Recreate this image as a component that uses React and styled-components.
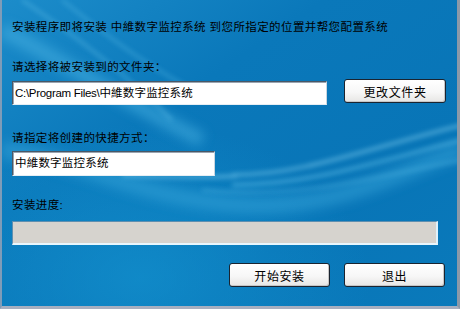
import React from "react";
import styled, { createGlobalStyle } from "styled-components";

const Global = createGlobalStyle`
  html, body { margin: 0; padding: 0; background: #fff; }
  body { font-family: "Liberation Sans", "Noto Sans CJK SC", sans-serif; }
`;

const Frame = styled.div`
  position: relative;
  width: 460px;
  height: 309px;
  box-sizing: border-box;
  border-left: 2px solid #7f9cb8;
  border-right: 3px solid #8c99a8;
  border-bottom: 3px solid #a7afc0;
  overflow: hidden;
  background: #0a77b9;
`;

const Backdrop = styled.svg`
  position: absolute;
  left: 0;
  top: 0;
  width: 460px;
  height: 309px;
  z-index: 0;
`;

const Content = styled.div`
  position: relative;
  z-index: 1;
  display: flex;
  flex-direction: column;
  padding: 20px 0 0 10px;
  font-size: 11.5px;
  letter-spacing: 0.4px;
  color: #000;
`;

const Text = styled.div`
  height: 14px;
  line-height: 14px;
  white-space: nowrap;
  margin-top: ${(p) => p.$mt || 0}px;
`;

const Row = styled.div`
  display: flex;
  align-items: flex-start;
  margin-top: ${(p) => p.$mt || 0}px;
  width: ${(p) => p.$w || "auto"};
  justify-content: ${(p) => p.$justify || "flex-start"};
  gap: ${(p) => p.$gap || 0}px;
`;

const Field = styled.div`
  box-sizing: border-box;
  width: ${(p) => p.$w}px;
  height: ${(p) => p.$h}px;
  margin-top: ${(p) => p.$mt || 0}px;
  margin-right: ${(p) => p.$mr || 0}px;
  background: #fff;
  border-top: 1px solid #4a5866;
  border-left: 1px solid #4a5866;
  border-right: 1px solid #c9d6e0;
  border-bottom: 1px solid #e6eef4;
  box-shadow: inset 1px 1px 0 #9aa6b2;
  padding: 0 2px;
  line-height: ${(p) => p.$h - 2}px;
  font-size: 11.5px;
  letter-spacing: 0.2px;
  white-space: nowrap;
`;

const Latin = styled.span`
  letter-spacing: -0.3px;
`;

const Button = styled.div`
  box-sizing: border-box;
  width: ${(p) => p.$w}px;
  height: 24px;
  border: 1px solid #1a2430;
  border-radius: 3px;
  background: linear-gradient(180deg, #ffffff 0%, #f7f7f7 55%, #e7e6e4 100%);
  box-shadow: inset -1px -1px 0 #c6c6c6;
  display: flex;
  align-items: center;
  justify-content: center;
  font-size: 12px;
  letter-spacing: 0.6px;
  color: #000;
`;

const Progress = styled.div`
  box-sizing: border-box;
  width: 426px;
  height: 24px;
  margin-top: 9px;
  background: #d6d3ce;
  border-top: 1px solid #5f8fb0;
  border-left: 1px solid #5f8fb0;
  border-right: 2px solid #dff2fc;
  border-bottom: 2px solid #e8f6fd;
`;

export default function App() {
  return (
    <>
      <Global />
      <Frame>
        <Backdrop viewBox="0 0 460 309" preserveAspectRatio="none">
          <defs>
            <linearGradient id="base" x1="0" y1="0" x2="1" y2="1">
              <stop offset="0" stopColor="#1c8cca" />
              <stop offset="0.35" stopColor="#0a78ba" />
              <stop offset="0.7" stopColor="#0875b7" />
              <stop offset="1" stopColor="#0a7abb" />
            </linearGradient>
            <radialGradient id="glowB" cx="0.3" cy="0.9" r="0.5">
              <stop offset="0" stopColor="#1596d2" stopOpacity="0.6" />
              <stop offset="1" stopColor="#1596d2" stopOpacity="0" />
            </radialGradient>
            <filter id="blur" x="-20%" y="-20%" width="140%" height="140%">
              <feGaussianBlur stdDeviation="2.5" />
            </filter>
            <filter id="blur2" x="-20%" y="-20%" width="140%" height="140%">
              <feGaussianBlur stdDeviation="6" />
            </filter>
          </defs>
          <rect width="460" height="309" fill="url(#base)" />
          <rect width="460" height="309" fill="url(#glowB)" />
          <g filter="url(#blur2)" opacity="0.5">
            <path d="M0 30 C 60 60, 120 100, 200 140" stroke="#4fb8e6" strokeWidth="14" fill="none" />
            <path d="M0 150 C 80 160, 140 200, 240 205 S 400 170, 460 150" stroke="#3aa8dc" strokeWidth="16" fill="none" />
          </g>
          <g filter="url(#blur)" opacity="0.6">
            <path d="M20 0 C 80 40, 130 80, 170 120" stroke="#6cc8ee" strokeWidth="2" fill="none" />
            <path d="M60 0 C 110 40, 150 70, 210 100" stroke="#5bbde8" strokeWidth="2" fill="none" />
            <path d="M230 175 C 300 175, 360 150, 460 125" stroke="#8ad6f4" strokeWidth="3" fill="none" />
            <path d="M230 185 C 310 185, 380 160, 460 140" stroke="#6cc8ee" strokeWidth="3" fill="none" />
            <path d="M200 190 C 300 200, 380 175, 460 160" stroke="#5bbde8" strokeWidth="2" fill="none" />
            <path d="M120 175 C 170 178, 200 178, 235 176" stroke="#8ad6f4" strokeWidth="3" fill="none" />
          </g>
        </Backdrop>
        <Content>
          <Text>安装程序即将安装 中維数字监控系统 到您所指定的位置并帮您配置系统</Text>
          <Text $mt={26}>请选择将被安装到的文件夹：</Text>
          <Row $mt={5}>
            <Field $w={315} $h={24} $mt={2} $mr={17}><Latin>C:\Program Files\</Latin>中維数字监控系统</Field>
            <Button $w={102}>更改文件夹</Button>
          </Row>
          <Text $mt={26}>请指定将创建的快捷方式：</Text>
          <Field $w={203} $h={25} $mt={6}>中維数字监控系统</Field>
          <Text $mt={22}>安装进度:</Text>
          <Progress />
          <Row $mt={18} $w="433px" $justify="flex-end" $gap={14}>
            <Button $w={101}>开始安装</Button>
            <Button $w={101}>退出</Button>
          </Row>
        </Content>
      </Frame>
    </>
  );
}
